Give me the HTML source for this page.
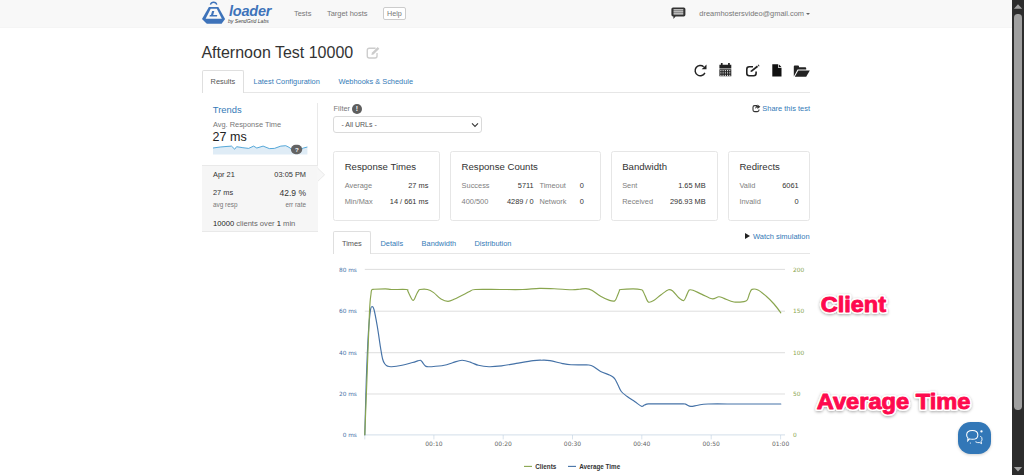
<!DOCTYPE html>
<html lang="en">
<head>
<meta charset="utf-8">
<title>Afternoon Test 10000 - loader</title>
<style>
html,body{margin:0;padding:0;}
body{width:1024px;height:475px;overflow:hidden;position:relative;background:#fff;
  font-family:"Liberation Sans",Arial,sans-serif;color:#333;font-size:7.4px;}
*{box-sizing:border-box;}
.t{position:absolute;white-space:nowrap;line-height:10px;height:10px;}
.r{text-align:right;}
.link{color:#337ab7;}
.mut{color:#808080;}
.abs{position:absolute;}
/* navbar */
#nav{position:absolute;left:0;top:0;width:1012px;height:28px;background:#f8f8f8;border-bottom:1px solid #f5f5f5;}
.navl{color:#777;font-size:7.45px;}
/* scrollbar */
#sb{position:absolute;left:1012px;top:0;width:12px;height:475px;background:#2c2c2c;}
#sb .th{position:absolute;left:2.4px;top:14px;width:7.4px;height:395.5px;border-radius:3.7px;background:#9f9f9f;}
#sb .up{position:absolute;left:2.2px;top:4.2px;width:0;height:0;border-left:3.9px solid transparent;border-right:3.9px solid transparent;border-bottom:4.4px solid #9f9f9f;}
#sb .dn{position:absolute;left:2.2px;top:466.5px;width:0;height:0;border-left:3.9px solid transparent;border-right:3.9px solid transparent;border-top:4.4px solid #9f9f9f;}
/* tabs */
.tabline{position:absolute;height:1px;background:#e6e6e6;}
.tab{position:absolute;border:1px solid #dfdfdf;border-bottom:none;border-radius:2px 2px 0 0;background:#fff;}
/* cards */
.card{position:absolute;top:151px;height:69.5px;border:1px solid #e6e6e6;border-radius:2.5px;background:#fff;}
.ct{font-size:9.6px;color:#333;}
.v{color:#333;}
/* chart */
.ax{font-family:"DejaVu Sans","Liberation Sans",sans-serif;}
/* overlay captions */
.cap{position:absolute;white-space:nowrap;font-weight:bold;font-size:22.4px;line-height:26px;color:#f3145b;transform:scaleX(1.04);transform-origin:0 0;
  -webkit-text-stroke:0.8px #f3145b;
  text-shadow:1.4px 0 0 #fff,-1.4px 0 0 #fff,0 1.4px 0 #fff,0 -1.4px 0 #fff,1px 1px 0 #fff,-1px 1px 0 #fff,1px -1px 0 #fff,-1px -1px 0 #fff,0 1px 3px rgba(0,0,0,.45),0 0 4px rgba(0,0,0,.25);}
</style>
</head>
<body>

<!-- NAVBAR -->
<div id="nav">
  <svg class="abs" style="left:198px;top:0;" width="30" height="26" viewBox="0 0 30 26">
    <path d="M12.4 4.7 A3.3 3.3 0 0 1 18.8 4.7" fill="none" stroke="#3e73ba" stroke-width="1.35"/>
    <path d="M10.9 7 L20.3 7 L27.1 18.9 L23.6 23.7 L8.8 23.7 L4 18.9 Z" fill="#3e73ba"/>
    <path d="M12.7 8.8 L18.8 8.8 L23.85 18.85 L7.65 18.85 Z" fill="#f8f8f8"/>
    <path d="M14.1 10.9 L16.3 10.9 L15.2 15 L19.3 15 L18.9 16.5 L11.5 16.5 L11.9 15 L13 15 Z" fill="#3e73ba"/>
  </svg>
  <div class="t" style="left:229px;top:1.8px;font-size:14.5px;line-height:18px;height:18px;font-weight:bold;font-style:italic;color:#3e73ba;letter-spacing:-0.22px;">loader</div>
  <div class="t" style="left:228px;top:17.6px;font-size:5.1px;line-height:7px;height:7px;font-style:italic;color:#444;">by SendGrid Labs</div>
  <div class="t navl" style="left:294px;top:9.2px;">Tests</div>
  <div class="t navl" style="left:327px;top:9.2px;">Target hosts</div>
  <div class="abs" style="left:383.4px;top:7.4px;width:22.4px;height:12.2px;border:1px solid #ccc;border-radius:2px;background:#fff;"></div>
  <div class="t navl" style="left:387px;top:9.2px;font-size:7.2px;">Help</div>
  <!-- chat icon -->
  <svg class="abs" style="left:671.3px;top:7.2px;" width="15" height="13" viewBox="0 0 15 13">
    <path d="M2 0.4 H12.8 Q14.4 0.4 14.4 2 V7.8 Q14.4 9.4 12.8 9.4 H4.6 L2.4 12 V9.4 H2 Q0.4 9.4 0.4 7.8 V2 Q0.4 0.4 2 0.4 Z" fill="#333"/>
    <path d="M2.5 2.9 H12.3 M2.5 4.9 H12.3 M2.5 6.9 H12.3" stroke="#e8e8e8" stroke-width="1.15" fill="none"/>
  </svg>
  <div class="t navl" style="left:699.3px;top:9.2px;">dreamhostersvideo@gmail.com</div>
  <div class="abs" style="left:805.8px;top:12.6px;width:0;height:0;border-left:2px solid transparent;border-right:2px solid transparent;border-top:2.2px solid #666;"></div>
</div>

<!-- TITLE -->
<div class="t" style="left:201.4px;top:42.8px;font-size:16px;line-height:20px;height:20px;color:#333;">Afternoon Test 10000</div>
<svg class="abs" style="left:366px;top:45.6px;" width="14.6" height="13.5" viewBox="0 0 14 13">
  <path d="M9.2 2.2 H3.2 Q1.2 2.2 1.2 4.2 V9.6 Q1.2 11.6 3.2 11.6 H8.6 Q10.6 11.6 10.6 9.6 V6.8" fill="none" stroke="#ccc" stroke-width="1.3"/>
  <path d="M5.2 8.6 L5.6 6.6 L11.2 1 L12.8 2.6 L7.2 8.2 Z" fill="#ccc"/>
</svg>

<!-- TOP ICONS -->
<svg class="abs" style="left:692px;top:62px;" width="120" height="17" viewBox="0 0 120 17">
  <!-- refresh -->
  <path d="M12.9 10.9 A5.15 5.15 0 1 1 11.7 4.75" fill="none" stroke="#222" stroke-width="1.45"/>
  <path d="M14.5 2.5 V7.3 H9.7 Z" fill="#222"/>
  <!-- calendar -->
  <path d="M27.4 2.8 H39.3 V6.6 H27.4 Z M27.4 7.2 H39.3 V14.3 H27.4 Z" fill="#222"/>
  <path d="M28.9 0.9 h1.7 v2.6 h-1.7 Z M36.1 0.9 h1.7 v2.6 h-1.7 Z" fill="#222"/>
  <path d="M28.40 8.05 h1 v0.9 h-1 Z M28.40 9.75 h1 v0.9 h-1 Z M28.40 11.45 h1 v0.9 h-1 Z M28.40 13.05 h1 v0.9 h-1 Z M30.60 8.05 h1 v0.9 h-1 Z M30.60 9.75 h1 v0.9 h-1 Z M30.60 11.45 h1 v0.9 h-1 Z M30.60 13.05 h1 v0.9 h-1 Z M32.85 8.05 h1 v0.9 h-1 Z M32.85 9.75 h1 v0.9 h-1 Z M32.85 11.45 h1 v0.9 h-1 Z M32.85 13.05 h1 v0.9 h-1 Z M35.10 8.05 h1 v0.9 h-1 Z M35.10 9.75 h1 v0.9 h-1 Z M35.10 11.45 h1 v0.9 h-1 Z M35.10 13.05 h1 v0.9 h-1 Z M37.30 8.05 h1 v0.9 h-1 Z M37.30 9.75 h1 v0.9 h-1 Z M37.30 11.45 h1 v0.9 h-1 Z M37.30 13.05 h1 v0.9 h-1 Z" fill="#f2f2f2"/>
  <!-- edit -->
  <path d="M61 4.8 H57.2 Q54.8 4.8 54.8 7.2 V11.3 Q54.8 13.7 57.2 13.7 H61.7 Q64.1 13.7 64.1 11.3 V9.6" fill="none" stroke="#222" stroke-width="1.6"/>
  <path d="M58.5 10.1 L58.9 8.5 L65 3.6 L66.1 5 L60 9.8 Z" fill="#222"/>
  <path d="M65.7 3.1 L66.5 2.5 L67.6 3.9 L66.8 4.5 Z" fill="#222"/>
  <!-- file -->
  <path d="M80.3 2.2 H86 V5.8 H89.5 V14.6 H80.3 Z" fill="#111"/>
  <path d="M86.7 2.3 L89.4 5.1 H86.7 Z" fill="#111"/>
  <!-- folder open -->
  <path d="M101.8 14.6 V4.6 Q101.8 3.6 102.8 3.6 H106 Q107 3.6 107 4.6 V5.2 H113.2 Q114.2 5.2 114.2 6.2 V7.4 H105.6 L101.8 14.6 Z" fill="#222"/>
  <path d="M106.3 8.4 H117.8 L114.2 14.8 H102.8 Z" fill="#222"/>
</svg>

<!-- MAIN TABS -->
<div class="tabline" style="left:202px;top:92px;width:608px;"></div>
<div class="tab" style="left:202px;top:70.2px;width:42px;height:22.8px;"></div>
<div class="t" style="left:210.6px;top:76.7px;color:#555;">Results</div>
<div class="t link" style="left:253.6px;top:76.7px;">Latest Configuration</div>
<div class="t link" style="left:338.4px;top:76.7px;">Webhooks &amp; Schedule</div>

<!-- SIDEBAR -->
<div class="abs" style="left:202px;top:102.6px;width:115.8px;height:62.6px;border-right:1px solid #e9e9e9;background:#fff;"></div>
<div class="abs" style="left:202px;top:165.2px;width:115.8px;height:66.5px;background:#f6f6f6;border-top:1px solid #e9e9e9;border-bottom:1px solid #e9e9e9;"></div>
<svg class="abs" style="left:316.8px;top:166px;" width="10" height="18" viewBox="0 0 10 18">
  <path d="M0.5 2 L7.6 8.8 L0.5 15.6" fill="#f7f7f7" stroke="#e6e6e6" stroke-width="0.9"/>
  <path d="M0 1.4 V16.2 H0.9 V2.3 Z" fill="#f6f6f6"/>
</svg>
<div class="t link" style="left:212.8px;top:104.1px;font-size:9.4px;line-height:12px;height:12px;">Trends</div>
<div class="t" style="left:213px;top:119.9px;font-size:7.4px;color:#777;">Avg. Response Time</div>
<div class="t" style="left:212.6px;top:129.2px;font-size:12.5px;line-height:16px;height:16px;color:#222;">27 ms</div>
<svg class="abs" style="left:213px;top:144px;" width="95" height="12" viewBox="0 0 95 12">
  <path d="M0.0 4.0 L7.2 3.0 L13.0 2.5 L18.5 2.1 L21.7 5.2 L23.6 2.7 L29.9 3.7 L35.6 4.4 L40.6 2.1 L43.8 4.0 L50.1 2.1 L56.4 4.6 L61.4 4.4 L67.8 2.1 L72.8 1.7 L76.0 3.3 L80.4 6.5 L85.4 5.9 L90.5 4.0 L94.4 3.0 V10.6 H0 Z" fill="#dfecf6"/>
  <path d="M0.0 4.0 L7.2 3.0 L13.0 2.5 L18.5 2.1 L21.7 5.2 L23.6 2.7 L29.9 3.7 L35.6 4.4 L40.6 2.1 L43.8 4.0 L50.1 2.1 L56.4 4.6 L61.4 4.4 L67.8 2.1 L72.8 1.7 L76.0 3.3 L80.4 6.5 L85.4 5.9 L90.5 4.0 L94.4 3.0" fill="none" stroke="#3a9ad2" stroke-width="0.85" stroke-linejoin="round"/>
  <rect x="77.9" y="0.8" width="11.3" height="9.4" rx="4.7" fill="#636363"/>
</svg>
<div class="t" style="left:294.9px;top:144.6px;font-size:6.2px;font-weight:bold;color:#fff;">?</div>

<div class="t" style="left:213px;top:170px;">Apr 21</div>
<div class="t r" style="left:246px;width:60px;top:170px;">03:05 PM</div>
<div class="t" style="left:213px;top:188px;">27 ms</div>
<div class="t r" style="left:246px;width:60px;top:187.8px;font-size:8.5px;">42.9 %</div>
<div class="t" style="left:213px;top:199.6px;font-size:6.4px;color:#777;">avg resp</div>
<div class="t r" style="left:246px;width:60px;top:199.6px;font-size:6.4px;color:#777;">err rate</div>
<div class="t" style="left:213px;top:218.8px;color:#686868;font-size:7.6px;"><span style="color:#222">10000</span> clients over <span style="color:#222">1</span> min</div>

<!-- FILTER -->
<div class="t" style="left:333.6px;top:103.7px;font-size:7.4px;color:#777;">Filter</div>
<div class="abs" style="left:351.9px;top:103.9px;width:9.8px;height:9.8px;border-radius:50%;background:#5e5e5e;"></div>
<div class="t" style="left:355.7px;top:103.8px;font-size:6.8px;font-weight:bold;color:#fff;">!</div>
<div class="abs" style="left:333.2px;top:116.4px;width:148.4px;height:16.3px;border:1px solid #dadada;border-radius:3px;background:#fff;"></div>
<div class="t" style="left:341.4px;top:119.7px;font-size:7px;color:#555;">- All URLs -</div>
<svg class="abs" style="left:471px;top:121.8px;" width="8" height="6" viewBox="0 0 8 6"><path d="M1 1.4 L4 4.4 L7 1.4" fill="none" stroke="#333" stroke-width="1.05"/></svg>

<!-- share -->
<svg class="abs" style="left:752px;top:103.8px;" width="9" height="9" viewBox="0 0 9 9">
  <path d="M5 1.6 H2.6 Q1 1.6 1 3.2 V6 Q1 7.6 2.6 7.6 H5.4 Q7 7.6 7 6 V5.4" fill="none" stroke="#333" stroke-width="1.1"/>
  <path d="M5.4 0.4 L8.4 2.7 L5.4 5 V3.6 Q4 3.6 3.2 5 Q3.2 2 5.4 1.8 Z" fill="#333"/>
</svg>
<div class="t link r" style="left:740px;width:70px;top:103.7px;font-size:7.47px;">Share this test</div>

<!-- CARDS -->
<div class="card" style="left:333.2px;width:106.4px;"></div>
<div class="t ct" style="left:344.7px;top:161px;line-height:12px;height:12px;">Response Times</div>
<div class="t mut" style="left:344.7px;top:181.1px;">Average</div>
<div class="t v r" style="left:378px;width:50.4px;top:181.1px;">27 ms</div>
<div class="t mut" style="left:344.7px;top:197.1px;">Min/Max</div>
<div class="t v r" style="left:378px;width:50.4px;top:197.1px;">14 / 661 ms</div>

<div class="card" style="left:450.3px;width:150.8px;"></div>
<div class="t ct" style="left:461.6px;top:161px;line-height:12px;height:12px;">Response Counts</div>
<div class="t mut" style="left:461.6px;top:181.1px;">Success</div>
<div class="t v r" style="left:493px;width:40.7px;top:181.1px;">5711</div>
<div class="t mut" style="left:539.4px;top:181.1px;">Timeout</div>
<div class="t v r" style="left:563px;width:20.8px;top:181.1px;">0</div>
<div class="t mut" style="left:461.6px;top:197.1px;">400/500</div>
<div class="t v r" style="left:493px;width:40.7px;top:197.1px;">4289 / 0</div>
<div class="t mut" style="left:539.4px;top:197.1px;">Network</div>
<div class="t v r" style="left:563px;width:20.8px;top:197.1px;">0</div>

<div class="card" style="left:611.4px;width:106.2px;"></div>
<div class="t ct" style="left:622.2px;top:161px;line-height:12px;height:12px;">Bandwidth</div>
<div class="t mut" style="left:622.2px;top:181.1px;">Sent</div>
<div class="t v r" style="left:655px;width:50.7px;top:181.1px;">1.65 MB</div>
<div class="t mut" style="left:622.2px;top:197.1px;">Received</div>
<div class="t v r" style="left:655px;width:50.7px;top:197.1px;">296.93 MB</div>

<div class="card" style="left:728.3px;width:81.4px;"></div>
<div class="t ct" style="left:739.4px;top:161px;line-height:12px;height:12px;">Redirects</div>
<div class="t mut" style="left:739.4px;top:181.1px;">Valid</div>
<div class="t v r" style="left:768px;width:30.7px;top:181.1px;">6061</div>
<div class="t mut" style="left:739.4px;top:197.1px;">Invalid</div>
<div class="t v r" style="left:768px;width:30.7px;top:197.1px;">0</div>

<!-- CHART TABS -->
<div class="tabline" style="left:333px;top:253px;width:477px;"></div>
<div class="tab" style="left:333.2px;top:231.4px;width:37.8px;height:22.6px;"></div>
<div class="t" style="left:341.9px;top:238.6px;color:#555;">Times</div>
<div class="t link" style="left:380.5px;top:238.6px;">Details</div>
<div class="t link" style="left:421.6px;top:238.6px;">Bandwidth</div>
<div class="t link" style="left:474.5px;top:238.6px;">Distribution</div>
<div class="abs" style="left:744.8px;top:233.4px;width:0;height:0;border-top:3.4px solid transparent;border-bottom:3.4px solid transparent;border-left:5.6px solid #222;"></div>
<div class="t link r" style="left:740px;width:69.6px;top:232.4px;font-size:7.47px;">Watch simulation</div>

<!-- CHART -->
<svg class="abs ax" style="left:330px;top:258px;" width="490" height="217" viewBox="330 258 490 217">
  <g stroke="#d0d0d0" stroke-width="0.7" fill="none">
    <path d="M364.8 269.4 H785 M364.8 311.2 H785 M364.8 352.7 H785 M364.8 394 H785"/>
  </g>
  <path d="M364.8 434.9 H785" stroke="#c0d0e0" stroke-width="0.7"/>
  <path d="M364.8 435 V439.4 M433.9 435 V439.4 M503.2 435 V439.4 M572.5 435 V439.4 M641.8 435 V439.4 M711.2 435 V439.4 M780.6 435 V439.4" stroke="#c0d0e0" stroke-width="0.6"/>
  <g font-size="5.8" fill="#4572a7" text-anchor="end">
    <text x="356.9" y="271.5">80 ms</text>
    <text x="356.9" y="313.2">60 ms</text>
    <text x="356.9" y="354.7">40 ms</text>
    <text x="356.9" y="396.0">20 ms</text>
    <text x="356.9" y="437.0">0 ms</text>
  </g>
  <g font-size="5.9" fill="#89a54e">
    <text x="793" y="271.8">200</text>
    <text x="793" y="313.2">150</text>
    <text x="793" y="354.6">100</text>
    <text x="793" y="395.8">50</text>
    <text x="793" y="436.7">0</text>
  </g>
  <g font-size="6" fill="#666" text-anchor="middle">
    <text x="433.9" y="445.6">00:10</text>
    <text x="503.2" y="445.6">00:20</text>
    <text x="572.5" y="445.6">00:30</text>
    <text x="641.8" y="445.6">00:40</text>
    <text x="711.2" y="445.6">00:50</text>
    <text x="780.6" y="445.6">01:00</text>
  </g>
  <path id="avg" d="M364.8 434.8 C365.1 425.7 365.7 397.0 366.3 380.0 C366.9 363.0 367.7 344.3 368.4 332.6 C369.1 320.9 369.9 314.1 370.5 309.8 C371.1 306.1 371.4 306.8 372.0 306.7 C372.6 306.6 373.1 306.2 374.0 309.5 C374.9 312.8 376.2 320.0 377.3 326.3 C378.4 332.6 379.6 341.9 380.5 347.4 C381.4 352.8 381.9 356.3 382.6 359.0 C383.3 361.7 383.9 362.6 384.7 363.8 C385.5 365.0 386.2 365.6 387.4 366.1 C388.5 366.6 389.2 366.8 391.6 366.7 C394.1 366.6 398.6 366.0 402.1 365.3 C405.6 364.6 410.0 363.2 412.6 362.5 C415.2 361.8 416.3 361.3 417.6 360.9 C418.9 360.5 419.7 360.2 420.4 360.3 C421.1 360.4 421.3 360.9 421.8 361.4 C422.3 361.9 422.7 362.7 423.2 363.4 C423.7 364.1 424.4 365.1 425.0 365.6 C425.6 366.1 425.9 366.4 427.0 366.6 C428.1 366.8 428.7 366.9 431.6 366.7 C434.5 366.5 440.7 366.0 444.2 365.3 C447.7 364.6 449.6 363.6 452.6 362.7 C455.6 361.8 458.9 360.2 462.1 360.2 C465.3 360.2 468.9 361.8 471.6 362.7 C474.3 363.6 475.5 364.6 478.4 365.3 C481.3 366.0 485.1 366.6 489.0 366.7 C492.9 366.8 497.1 366.4 501.6 365.9 C506.2 365.3 511.0 364.3 516.3 363.4 C521.6 362.5 529.0 361.1 533.2 360.6 C537.4 360.1 538.8 360.2 541.6 360.2 C544.4 360.2 546.5 360.0 550.0 360.6 C553.5 361.2 559.1 362.9 562.6 363.6 C566.1 364.3 567.5 364.6 571.0 364.8 C574.5 365.0 580.7 364.9 583.7 364.9 C586.7 364.9 587.2 364.8 588.8 365.0 C590.4 365.2 591.3 365.3 593.3 366.4 C595.3 367.5 597.9 370.0 600.6 371.4 C603.3 372.8 607.4 374.1 609.5 375.0 C611.6 375.9 612.0 376.2 613.0 377.0 C614.0 377.8 614.6 378.4 615.4 379.7 C616.2 381.0 617.0 383.0 618.0 385.0 C619.0 387.0 619.8 389.6 621.3 391.5 C622.8 393.4 625.0 394.8 627.2 396.5 C629.4 398.2 632.2 399.9 634.6 401.5 C637.0 403.1 639.8 405.7 641.4 406.3 C643.0 406.9 643.3 405.4 644.5 405.0 C645.7 404.6 645.8 404.1 648.4 403.9 C651.0 403.7 654.2 403.9 660.0 403.9 C665.8 403.9 678.9 403.8 683.2 403.9 C687.5 404.0 684.7 404.0 686.0 404.4 C687.3 404.8 688.8 406.3 690.8 406.4 C692.8 406.5 695.1 405.6 698.0 405.2 C700.9 404.8 701.0 404.2 708.0 404.0 C715.0 403.8 727.9 404.0 740.0 404.0 C752.1 404.0 774.0 404.0 780.8 404.0" fill="none" stroke="#4572a7" stroke-width="1.15" stroke-linejoin="round" stroke-linecap="round"/>
  <path id="cli" d="M364.8 434.8 C365.1 425.7 366.1 400.5 366.9 380.0 C367.7 359.5 368.8 325.9 369.5 311.6 C370.2 297.3 370.6 297.6 371.0 294.0 C371.4 290.4 371.2 290.9 371.7 290.1 C372.2 289.3 371.7 289.5 374.0 289.3 C376.3 289.1 382.4 288.8 385.3 288.8 C388.2 288.8 388.1 289.4 391.6 289.5 C395.1 289.6 403.6 289.2 406.3 289.5 C409.0 289.8 407.3 290.1 407.8 291.0 C408.3 291.9 408.6 293.1 409.5 294.7 C410.4 296.3 412.1 300.6 413.3 300.4 C414.5 300.2 415.9 295.3 416.8 293.7 C417.7 292.1 418.1 291.3 418.6 290.6 C419.1 289.9 418.5 289.7 420.0 289.5 C421.5 289.3 425.1 289.0 427.4 289.5 C429.7 290.0 431.4 291.0 433.7 292.6 C436.0 294.2 438.6 297.6 441.0 299.0 C443.4 300.4 445.7 301.3 448.0 301.3 C450.3 301.3 451.8 300.3 454.7 299.0 C457.6 297.7 462.8 295.0 465.3 293.7 C467.9 292.4 468.3 291.9 470.0 291.2 C471.7 290.5 470.3 289.8 475.3 289.5 C480.3 289.2 492.1 289.5 500.0 289.5 C507.9 289.5 516.0 289.7 522.6 289.5 C529.2 289.3 534.2 288.5 539.5 288.4 C544.8 288.3 549.0 288.6 554.2 288.8 C559.5 289.0 566.8 289.6 571.0 289.7 C575.2 289.8 577.0 289.5 579.5 289.3 C582.0 289.1 583.9 288.4 585.9 288.6 C587.9 288.8 589.3 289.0 591.8 290.3 C594.2 291.6 597.6 294.5 600.6 296.2 C603.6 297.9 607.1 299.6 609.5 300.4 C611.9 301.2 613.4 301.5 614.8 300.9 C616.2 299.9 617.0 296.4 617.8 294.7 C618.6 293.0 618.9 291.7 619.4 290.8 C619.9 289.9 618.5 289.8 620.8 289.5 C623.1 289.2 629.6 288.8 633.1 288.8 C636.6 288.8 639.9 289.3 641.5 289.7 C643.1 290.1 642.4 290.3 643.0 291.2 C643.6 292.1 644.0 293.4 644.9 295.2 C645.8 297.0 646.9 301.2 648.4 302.1 C649.9 302.7 651.6 301.8 653.7 300.6 C655.8 299.4 658.6 296.5 661.1 294.7 C663.6 292.9 666.5 290.3 668.5 289.7 C670.5 289.1 671.2 289.9 672.9 291.2 C674.6 292.5 677.0 296.1 678.8 297.7 C680.6 299.3 682.4 300.9 683.6 300.6 C684.8 300.4 685.3 298.0 686.2 296.2 C687.1 294.4 688.1 291.0 689.2 290.0 C690.3 289.4 690.9 289.5 693.0 290.2 C695.1 290.9 698.8 293.0 702.0 294.4 C705.2 295.8 709.2 298.4 712.0 298.8 C714.8 299.2 716.8 296.9 718.8 296.8 C720.8 296.7 721.5 297.5 724.0 298.4 C726.5 299.3 730.7 301.5 734.0 302.0 C737.3 302.5 741.8 301.9 744.0 301.6 C746.2 301.3 746.3 301.3 747.2 300.0 C748.1 298.7 748.8 295.4 749.6 293.6 C750.4 291.8 750.6 290.0 752.0 289.4 C753.4 288.8 755.7 288.9 758.0 290.0 C760.3 291.1 763.3 293.7 766.0 296.0 C768.7 298.3 771.5 301.2 774.0 304.0 C776.5 306.8 779.7 311.3 780.8 312.8" fill="none" stroke="#89a54e" stroke-width="1.15" stroke-linejoin="round" stroke-linecap="round"/>
  <path d="M524 466.4 H532" stroke="#89a54e" stroke-width="1.1"/>
  <path d="M568 466.4 H576" stroke="#4572a7" stroke-width="1.1"/>
  <g font-size="6.3" font-weight="bold" fill="#333" font-family="Liberation Sans, sans-serif">
    <text x="535.3" y="468.6">Clients</text>
    <text x="579.2" y="468.6">Average Time</text>
  </g>
</svg>

<!-- CAPTIONS -->
<svg class="abs" style="left:800px;top:280px;" width="200" height="145" viewBox="800 280 200 145">
  <defs>
    <filter id="glow" x="-10%" y="-30%" width="120%" height="170%">
      <feGaussianBlur in="SourceAlpha" stdDeviation="1.8" result="b"/>
      <feOffset in="b" dx="0" dy="0.6" result="o"/>
      <feFlood flood-color="#000" flood-opacity="0.34"/>
      <feComposite in2="o" operator="in" result="s"/>
      <feMerge><feMergeNode in="s"/><feMergeNode in="SourceGraphic"/></feMerge>
    </filter>
  </defs>
  <g font-family="Liberation Sans, sans-serif" font-weight="bold" font-size="22">
    <g filter="url(#glow)" fill="#fff" stroke="#fff" stroke-width="3.8" stroke-linejoin="round">
      <text x="820.7" y="312" textLength="65.3" lengthAdjust="spacingAndGlyphs">Client</text>
      <text x="816.7" y="409.3" textLength="153.8" lengthAdjust="spacingAndGlyphs">Average Time</text>
    </g>
    <g fill="#fe0a4e" stroke="#fe0a4e" stroke-width="0.9" stroke-linejoin="round">
      <text x="820.7" y="312" textLength="65.3" lengthAdjust="spacingAndGlyphs">Client</text>
      <text x="816.7" y="409.3" textLength="153.8" lengthAdjust="spacingAndGlyphs">Average Time</text>
    </g>
  </g>
</svg>

<!-- CHAT WIDGET -->
<div class="abs" style="left:958.4px;top:421.6px;width:32.4px;height:32px;border-radius:12.5px;background:#3277b7;box-shadow:0 1px 3px rgba(0,0,0,.18);"></div>
<svg class="abs" style="left:963.6px;top:427.3px;" width="24.2" height="22" viewBox="0 0 22 20">
  <path d="M7.6 3.2 Q12.6 3.2 12.6 7.2 Q12.6 11.2 7.6 11.2 Q6.2 11.2 5 10.8 L3.4 12.6 L3.6 10 Q2.4 8.8 2.4 7.2 Q2.4 3.2 7.6 3.2 Z" fill="none" stroke="#fff" stroke-width="0.95"/>
  <path d="M14.8 8.2 Q16.8 9.4 16.4 11.6 Q16 12.8 15.6 13.2 L16 15.2 L14.4 14.2 Q12.4 14.6 10.4 13.4" fill="none" stroke="#fff" stroke-width="0.85"/>
  <circle cx="15.9" cy="4" r="1.05" fill="#fff"/>
  <circle cx="5.8" cy="14.6" r="0.5" fill="#fff"/>
</svg>

<!-- SCROLLBAR -->
<div id="sb"><div class="th"></div>
<svg class="abs" style="left:0;top:0;" width="12" height="475" viewBox="0 0 12 475"><path d="M1.9 8.7 L6 4.3 L10.1 8.7 Z M1.9 467 L6 471.5 L10.1 467 Z" fill="#a0a0a0"/></svg></div>

</body>
</html>
